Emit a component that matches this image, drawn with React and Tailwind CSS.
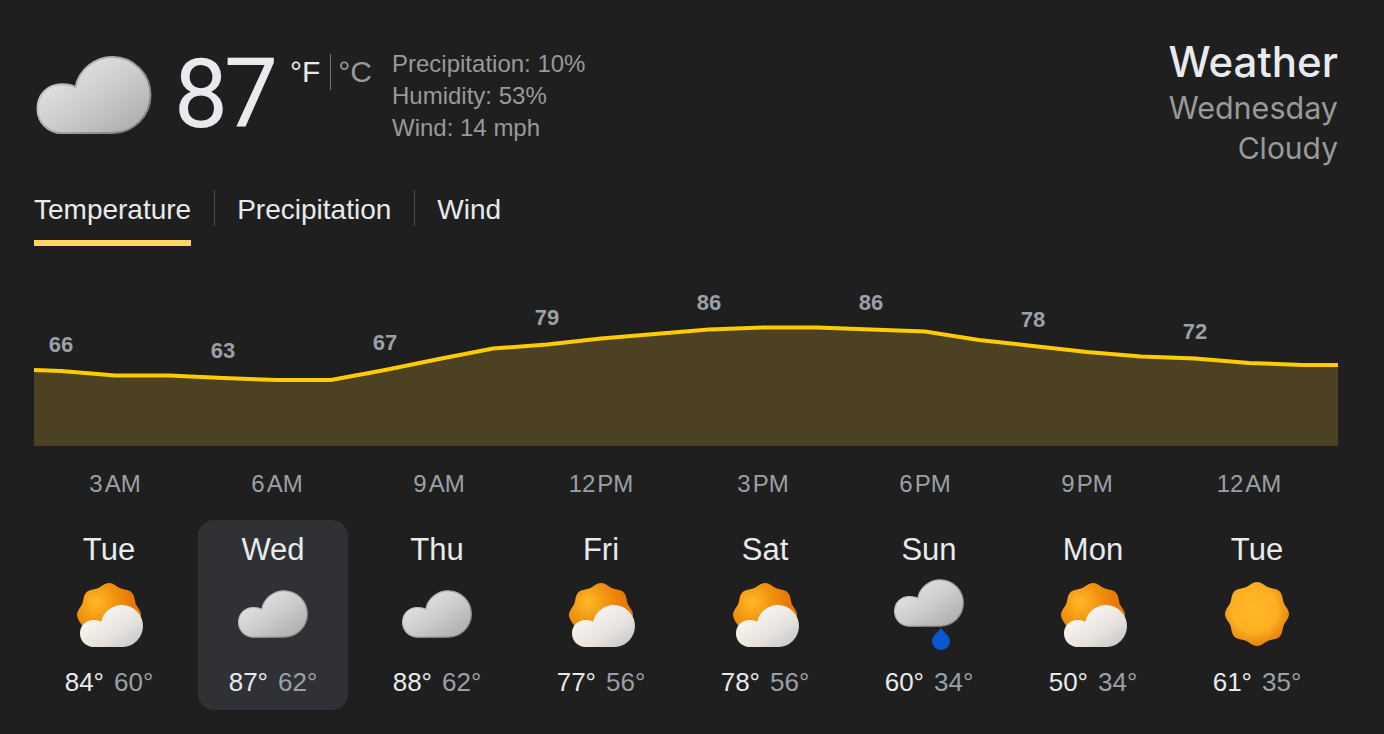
import React from 'react';

const hourLabels = ['3\u200aAM', '6\u200aAM', '9\u200aAM', '12\u200aPM', '3\u200aPM', '6\u200aPM', '9\u200aPM', '12\u200aAM'];

const chartPoints = [
  [34, 370], [61, 371], [115, 375.5], [169, 375.5], [223, 378], [277, 380], [331, 380],
  [385, 370], [439, 359], [493, 348.5], [547, 344.5], [601, 338.5], [655, 334], [709, 329.5],
  [763, 327.5], [817, 327.5], [871, 329.5], [925, 331.5], [979, 340], [1033, 346], [1087, 352],
  [1141, 356.5], [1195, 358.5], [1249, 363], [1303, 365], [1338, 365],
];

const chartValues = [
  { x: 61, y: 352, value: 66 },
  { x: 223, y: 358, value: 63 },
  { x: 385, y: 350, value: 67 },
  { x: 547, y: 325, value: 79 },
  { x: 709, y: 310, value: 86 },
  { x: 871, y: 310, value: 86 },
  { x: 1033, y: 327, value: 78 },
  { x: 1195, y: 339, value: 72 },
];

const days = [
  { name: 'Tue', icon: 'partly', high: 84, low: 60 },
  { name: 'Wed', icon: 'cloud', high: 87, low: 62, active: true },
  { name: 'Thu', icon: 'cloud', high: 88, low: 62 },
  { name: 'Fri', icon: 'partly', high: 77, low: 56 },
  { name: 'Sat', icon: 'partly', high: 78, low: 56 },
  { name: 'Sun', icon: 'rain', high: 60, low: 34 },
  { name: 'Mon', icon: 'partly', high: 50, low: 34 },
  { name: 'Tue', icon: 'sun', high: 61, low: 35 },
];

// small lobe on the left, big round lobe on the right, flat base
const CLOUD_PATH = 'M25 78C11 78 0 67 0 53C0 38 11 28 25 28C30 28 36 29 39 31A39 39 0 0 1 77 0A39 39 0 0 1 116 39A39 39 0 0 1 77 78Z';

// scalloped disc with eight soft bumps
function sunPath(cx, cy, r, bump) {
  const parts = [];
  for (let i = 0; i < 96; i++) {
    const a = (i / 96) * Math.PI * 2;
    const d = r + bump * Math.cos(a * 8);
    const x = (cx + Math.sin(a) * d).toFixed(2);
    const y = (cy - Math.cos(a) * d).toFixed(2);
    parts.push(`${i ? 'L' : 'M'}${x} ${y}`);
  }
  return parts.join('') + 'Z';
}

function GrayCloud({ className }) {
  const id = React.useId();
  return (
    <svg className={className} viewBox="-1 -1 118 80">
      <defs>
        <linearGradient id={`${id}f`} x1="0.1" y1="0.1" x2="0.85" y2="0.85">
          <stop offset="0" stopColor="#e8e8e8" />
          <stop offset="0.55" stopColor="#cdcdcd" />
          <stop offset="1" stopColor="#b3b3b3" />
        </linearGradient>
        <linearGradient id={`${id}s`} x1="0" y1="0" x2="1" y2="0.6">
          <stop offset="0" stopColor="#d8d8d8" />
          <stop offset="0.5" stopColor="#a8aaac" />
          <stop offset="1" stopColor="#7f8387" />
        </linearGradient>
      </defs>
      <path d={CLOUD_PATH} fill={`url(#${id}f)`} stroke={`url(#${id}s)`} strokeWidth="2" />
    </svg>
  );
}

function SunIcon({ className }) {
  const id = React.useId();
  return (
    <svg className={className} viewBox="0 0 64 64">
      <defs>
        <radialGradient id={id} cx="0.45" cy="0.42" r="0.6">
          <stop offset="0" stopColor="#ffb926" />
          <stop offset="0.6" stopColor="#fdb022" />
          <stop offset="1" stopColor="#e57f0c" />
        </radialGradient>
      </defs>
      <path d={sunPath(32, 32, 30.5, 1.5)} fill={`url(#${id})`} />
    </svg>
  );
}

function PartlyCloudy({ className }) {
  const id = React.useId();
  return (
    <svg className={className} viewBox="-2 -2 68 66">
      <defs>
        <radialGradient id={`${id}a`} cx="0.3" cy="0.3" r="0.55">
          <stop offset="0" stopColor="#ffb926" />
          <stop offset="0.6" stopColor="#f1900f" />
          <stop offset="1" stopColor="#e87a05" />
        </radialGradient>
        <linearGradient id={`${id}b`} x1="0.15" y1="0.1" x2="0.95" y2="0.9">
          <stop offset="0" stopColor="#fdfbf8" />
          <stop offset="0.65" stopColor="#e6e1dc" />
          <stop offset="1" stopColor="#c3c8cd" />
        </linearGradient>
      </defs>
      <path d={sunPath(32, 32, 30.5, 1.5)} fill={`url(#${id}a)`} />
      <g transform="translate(3 22) scale(0.543 0.539)">
        <path d={CLOUD_PATH} fill={`url(#${id}b)`} />
      </g>
    </svg>
  );
}

function RainCloud() {
  return (
    <div className="flex flex-col items-center">
      <GrayCloud className="w-[70px] h-[48px]" />
      <svg className="w-[18px] h-[22px] ml-[24px] mt-px" viewBox="0 0 18 22">
        <path d="M9 0C11 3.5 18 7.5 18 13A9 9 0 0 1 0 13C0 7.5 7 3.5 9 0Z" fill="#0b57d0" />
      </svg>
    </div>
  );
}

function DayIcon({ icon }) {
  if (icon === 'cloud') return <GrayCloud className="w-[70px] h-[48px]" />;
  if (icon === 'rain') return <RainCloud />;
  if (icon === 'sun') return <SunIcon className="w-16 h-16" />;
  return <PartlyCloudy className="w-[68px] h-[66px]" />;
}

export default function App() {
  const line = chartPoints.map(([x, y]) => `${x},${y}`).join(' ');

  return (
    <div className="w-full min-h-screen bg-[#1f1f1f] pl-[34px] pr-[46px] overflow-hidden font-['Liberation_Sans',Arial,sans-serif]">
      {/* Current conditions */}
      <div className="flex justify-between h-[190px] pt-[40px]">
        <div className="flex">
          <GrayCloud className="w-[116px] h-[78px] mt-[16px] ml-[2px]" />
          <div className="w-[116px] ml-[22px] mt-[-2px] h-[112px] text-[96px] leading-[112px] tracking-[-4px] font-normal text-[#e8eaed] font-['Roboto',sans-serif]">
            87
          </div>
          <div className="flex mt-[14px] h-[36px] text-[30px] leading-[36px]">
            <span className="text-[#e8eaed]">°F</span>
            <span className="w-px h-[36px] bg-[#70757a] ml-[10px] mr-[7px]" />
            <span className="text-[#999999]">°C</span>
          </div>
          <div className="ml-[20px] mt-[8px] text-[24px] leading-[32px] text-[#999999]">
            <div>Precipitation: 10%</div>
            <div>Humidity: 53%</div>
            <div>Wind: 14 mph</div>
          </div>
        </div>
        <div className="text-right font-['Inter',sans-serif]">
          <div className="mt-[-1px] text-[42px] leading-[46px] font-medium text-[#e8eaed]">Weather</div>
          <div className="mt-[3px] text-[30.5px] leading-[40px] text-[#999999]">Wednesday</div>
          <div className="text-[30px] leading-[40px] text-[#999999]">Cloudy</div>
        </div>
      </div>

      {/* Tabs */}
      <div className="flex items-start text-[28px] leading-[40px] text-[#e8eaed]">
        <div className="flex flex-col">
          <span>Temperature</span>
          <span className="h-[6px] mt-[10px] bg-[#fdd663]" />
        </div>
        <span className="w-px h-[36px] bg-[#4a4c4f] ml-[23px] mr-[22px]" />
        <span>Precipitation</span>
        <span className="w-px h-[36px] bg-[#4a4c4f] ml-[23px] mr-[22px]" />
        <span>Wind</span>
      </div>

      {/* Temperature chart */}
      <svg className="block w-[1304px] h-[166px] mt-[34px]" viewBox="34 280 1304 166">
        <polygon points={`34,446 ${line} 1338,446`} fill="#4d4123" />
        <polyline points={line} fill="none" stroke="#ffcc00" strokeWidth="4" />
        {chartValues.map((v) => (
          <text key={v.x} x={v.x} y={v.y} textAnchor="middle" fontSize="22" fontWeight="700" fill="#9aa0a6">
            {v.value}
          </text>
        ))}
      </svg>

      <div className="flex mt-[24px] h-[28px] text-[24px] leading-[28px] text-[#9aa0a6]">
        {hourLabels.map((label) => (
          <div key={label} className="w-[162px] text-center">
            {label}
          </div>
        ))}
      </div>

      {/* Daily forecast */}
      <div className="flex gap-[14px] mt-[22px]">
        {days.map((day, i) => (
          <div
            key={i}
            className={`w-[150px] h-[190px] rounded-[16px] flex flex-col items-center pt-[12px] ${day.active ? 'bg-[#303134]' : ''}`}
          >
            <div className="text-[31px] leading-[36px] text-[#e8eaed]">{day.name}</div>
            <div className="h-[72px] mt-[10px] flex items-center justify-center">
              <DayIcon icon={day.icon} />
            </div>
            <div className="mt-[17px] flex gap-[10px] text-[26px] leading-[30px]">
              <span className="text-[#e8eaed]">{day.high}°</span>
              <span className="text-[#9aa0a6]">{day.low}°</span>
            </div>
          </div>
        ))}
      </div>
    </div>
  );
}
